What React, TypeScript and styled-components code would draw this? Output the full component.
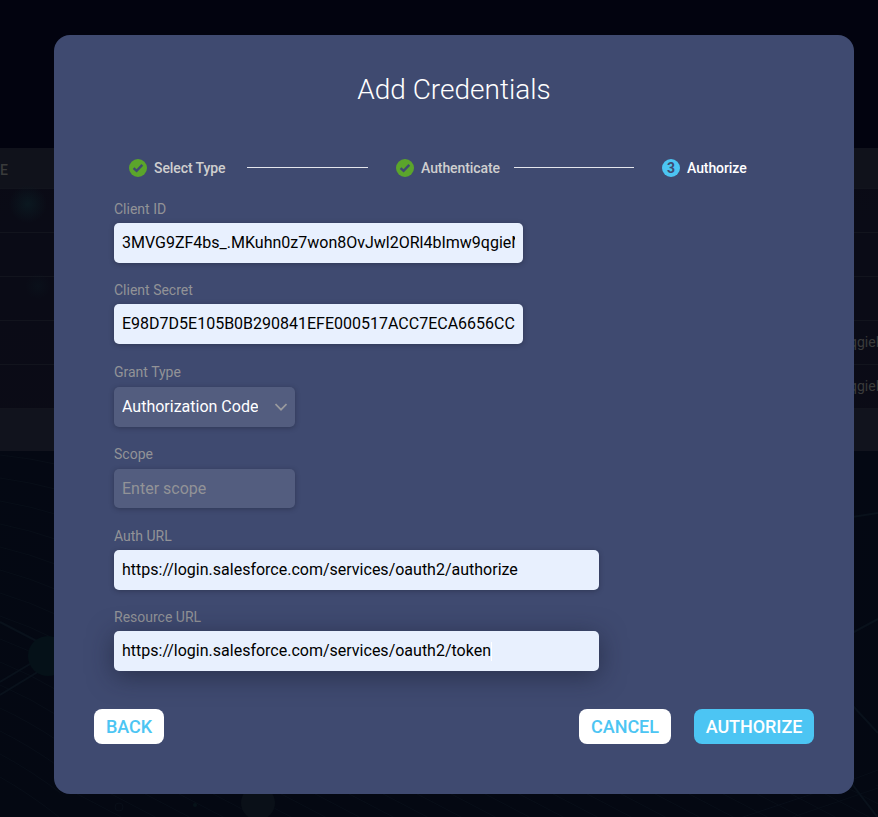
import React from "react";
import styled, { createGlobalStyle, css } from "styled-components";

const GlobalStyle = createGlobalStyle`
  *, *::before, *::after { box-sizing: border-box; }
  body {
    margin: 0;
    background: #02030f;
    font-family: Roboto, "Liberation Sans", sans-serif;
  }
  button { font-family: inherit; }
`;

const Page = styled.div`
  position: relative;
  width: 878px;
  height: 817px;
  overflow: hidden;
  padding: 35px 24px 23px 54px;
  background: linear-gradient(180deg, #02030f 0, #02030f 150px, #040813 455px, #040812 100%);
`;

const Backdrop = styled.div`
  position: absolute;
  inset: 0;
  padding-top: 148px;
`;

const Network = styled.svg`
  position: absolute;
  inset: 0;
`;

const Table = styled.div`
  position: relative;
  color: #3a3b3b;
  font-size: 14px;
`;

const TableRow = styled.div<{ $kind?: "head" | "foot" }>`
  display: flex;
  align-items: center;
  justify-content: space-between;
  height: 44px;
  padding-bottom: 2px;
  background: rgba(13, 14, 24, 0.75);
  border-bottom: 1px solid #12141d;
  ${(p) => p.$kind === "head" && css`height: 41px; padding: 3px 0 0; font-weight: 500; background: #10121b;`}
  ${(p) => p.$kind === "foot" && css`height: 42px; background: #11131d; border: 0;`}
`;

const CellEnd = styled.span`
  width: 29px;
  overflow: hidden;
  white-space: nowrap;
`;

const Dialog = styled.section`
  position: relative;
  display: flex;
  flex-direction: column;
  width: 800px;
  height: 759px;
  padding: 0 40px;
  border-radius: 16px;
  background: #3f4a70;
`;

const Title = styled.h1`
  margin: 37px 0 0;
  height: 36px;
  color: #fff;
  font-size: 28px;
  font-weight: 300;
  line-height: 36px;
  text-align: center;
`;

const Stepper = styled.ol`
  display: flex;
  align-items: center;
  height: 20px;
  margin: 50px 0 0;
  padding: 0 0 0 35px;
  list-style: none;
`;

const Step = styled.li<{ $width: number; $active?: boolean }>`
  display: flex;
  align-items: center;
  gap: 7px;
  width: ${(p) => p.$width}px;
  color: ${(p) => (p.$active ? "#fff" : "#cfcfcf")};
  font-size: 14px;
  font-weight: 500;
  line-height: 20px;
  letter-spacing: -0.08px;
  white-space: nowrap;
`;

const StepLine = styled.li<{ $width: number; $after: number }>`
  width: ${(p) => p.$width}px;
  height: 1px;
  margin: 0 ${(p) => p.$after}px 1px 0;
  background: #e4e6ec;
`;

const StepNumber = styled.span`
  width: 18px;
  height: 18px;
  border-radius: 50%;
  background: #4cc5f3;
  color: #3f4a70;
  font-size: 14px;
  font-weight: 700;
  line-height: 19px;
  text-align: center;
`;

const Fields = styled.div`
  display: flex;
  flex-direction: column;
  padding: 23px 20px 0;
`;

const Field = styled.div<{ $width: number; $gap: number; $after: number }>`
  display: flex;
  flex-direction: column;
  gap: ${(p) => p.$gap}px;
  width: ${(p) => p.$width}px;
  margin-bottom: ${(p) => p.$after}px;
`;

const Label = styled.span`
  height: 16px;
  color: #929397;
  font-size: 14px;
  line-height: 16px;
`;

const Control = styled.div<{ $tone?: "filled" | "dark"; $focused?: boolean; $height?: number }>`
  display: flex;
  align-items: center;
  justify-content: space-between;
  height: ${(p) => p.$height ?? 40}px;
  padding: 0 8px;
  border-radius: 5px;
  background: ${(p) => (p.$tone === "dark" ? "#535d7f" : "#e8f0fe")};
  box-shadow: ${(p) =>
    p.$focused ? "0 5px 26px rgba(24, 27, 45, 0.55)" : "0 1px 5px rgba(24, 27, 45, 0.4)"};
  color: ${(p) => (p.$tone === "dark" ? "#fff" : "#000")};
  font-size: 16px;
`;

const Value = styled.span<{ $placeholder?: boolean }>`
  overflow: hidden;
  white-space: nowrap;
  line-height: 24px;
  ${(p) => p.$placeholder && css`color: #929397;`}
`;

const Caret = styled.span`
  width: 1px;
  height: 19px;
  margin: 0 auto 0 0;
  background: #fff;
`;

const Actions = styled.footer`
  display: flex;
  margin-top: 38px;
`;

const Button = styled.button<{ $width: number; $primary?: boolean }>`
  width: ${(p) => p.$width}px;
  height: 35px;
  padding: 0;
  border: 0;
  border-radius: 8px;
  background: ${(p) => (p.$primary ? "#4cc5f3" : "#fff")};
  color: ${(p) => (p.$primary ? "#fff" : "#4cc5f3")};
  font-size: 18px;
  font-weight: 500;
  line-height: 35px;
  letter-spacing: -0.05px;
  &:nth-child(2) { margin-left: auto; }
  &:nth-child(3) { margin-left: 23px; }
`;

const DoneIcon = () => (
  <svg width="18" height="18" viewBox="0 0 18 18">
    <circle cx="9" cy="9" r="9" fill="#5ba52b" />
    <path d="M4.6 9.1 7.6 11.9 13.3 5.9" fill="none" stroke="#3f4a70" strokeWidth="2.4" />
  </svg>
);

const ChevronIcon = () => (
  <svg width="12" height="8" viewBox="0 0 12 8">
    <path d="M.5 1 6 6.7 11.5 1" fill="none" stroke="#999a9e" strokeWidth="1.7" />
  </svg>
);

const leftStrands = Array.from({ length: 15 }, (_, i) => 455 + i * 23);
const floorStrands = Array.from({ length: 25 }, (_, i) => 60 + i * 34);

export default function App() {
  return (
    <>
      <GlobalStyle />
      <Page>
        <Backdrop aria-hidden="true">
          <Network width="878" height="817" viewBox="0 0 878 817" fill="none">
            <defs>
              <radialGradient id="glow">
                <stop stopColor="#0b1820" />
                <stop offset="1" stopColor="#0b1820" stopOpacity="0" />
              </radialGradient>
            </defs>
            <g stroke="#080e18">
              {leftStrands.map((y, i) => (
                <path key={y} d={`M0 ${y} Q30 ${y + 3 + i} 60 ${y + 10 + i * 2.2}`} />
              ))}
              {floorStrands.map((x) => (
                <path key={x} d={`M${x} 785 l65 34`} />
              ))}
              <path d="M740 818l90-30 48-18M790 818l88-30" />
            </g>
            <g stroke="#09111b" strokeWidth="2">
              <path d="M0 622 50 648M0 682 45 655M0 695 54 662M852 517l26-4M852 633l26-14M852 705l26 28M852 784l26 34" />
            </g>
            <circle cx="48" cy="656" r="20" fill="#051118" />
            <circle cx="258" cy="803" r="17" fill="#0a1018" />
            <circle cx="119" cy="807" r="4" stroke="#080e18" />
            <circle cx="195" cy="805" r="2" fill="#061219" />
          </Network>
          <Table>
            <TableRow $kind="head"><span>E</span></TableRow>
            <TableRow />
            <TableRow />
            <TableRow />
            <TableRow><span /><CellEnd>qgieN</CellEnd></TableRow>
            <TableRow><span /><CellEnd>qgieN</CellEnd></TableRow>
            <TableRow $kind="foot" />
          </Table>
          <Network width="878" height="817" viewBox="0 0 878 817">
            <circle cx="28" cy="204" r="19" fill="url(#glow)" />
            <circle cx="38" cy="286" r="13" fill="url(#glow)" opacity=".4" />
          </Network>
        </Backdrop>

        <Dialog role="dialog" aria-label="Add Credentials">
          <Title>Add Credentials</Title>
          <Stepper>
            <Step $width={118}><DoneIcon />Select Type</Step>
            <StepLine $width={121} $after={28} />
            <Step $width={118}><DoneIcon />Authenticate</Step>
            <StepLine $width={120} $after={28} />
            <Step $width={100} $active><StepNumber>3</StepNumber>Authorize</Step>
          </Stepper>

          <Fields>
            <Field $width={409} $gap={6} $after={19}>
              <Label>Client ID</Label>
              <Control><Value>3MVG9ZF4bs_.MKuhn0z7won8OvJwl2ORl4bImw9qgieN</Value></Control>
            </Field>
            <Field $width={409} $gap={6} $after={20}>
              <Label>Client Secret</Label>
              <Control><Value>E98D7D5E105B0B290841EFE000517ACC7ECA6656CC</Value></Control>
            </Field>
            <Field $width={181} $gap={7} $after={19}>
              <Label>Grant Type</Label>
              <Control $tone="dark"><Value>Authorization Code</Value><ChevronIcon /></Control>
            </Field>
            <Field $width={181} $gap={7} $after={20}>
              <Label>Scope</Label>
              <Control $tone="dark" $height={39}><Value $placeholder>Enter scope</Value></Control>
            </Field>
            <Field $width={485} $gap={6} $after={19}>
              <Label>Auth URL</Label>
              <Control><Value>https://login.salesforce.com/services/oauth2/authorize</Value></Control>
            </Field>
            <Field $width={485} $gap={6} $after={0}>
              <Label>Resource URL</Label>
              <Control $focused><Value>https://login.salesforce.com/services/oauth2/token</Value><Caret /></Control>
            </Field>
          </Fields>

          <Actions>
            <Button $width={70}>BACK</Button>
            <Button $width={92}>CANCEL</Button>
            <Button $width={120} $primary>AUTHORIZE</Button>
          </Actions>
        </Dialog>
      </Page>
    </>
  );
}
